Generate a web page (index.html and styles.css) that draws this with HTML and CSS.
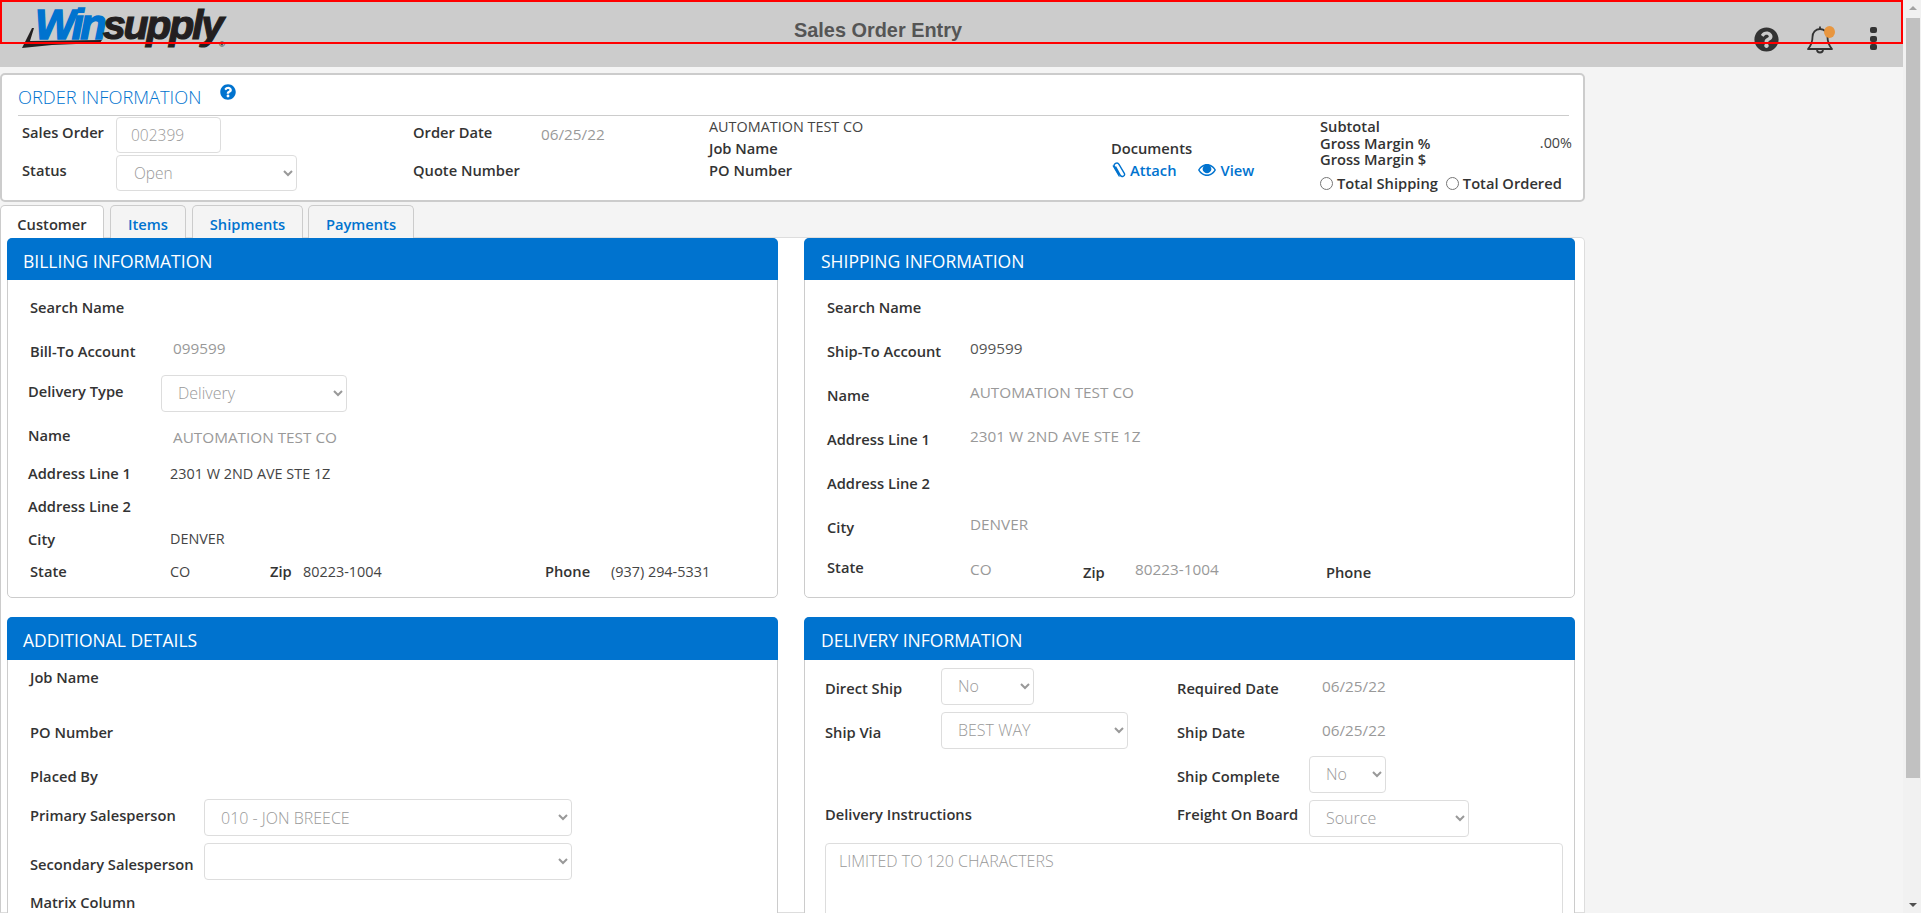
FILE: index.html
```html
<!DOCTYPE html>
<html lang="en">
<head>
  <meta charset="UTF-8" />
  <title>Sales Order Entry</title>
  <link rel="stylesheet" href="styles.css">
</head>
<body>
  <div class="page">
    <header class="topbar">
      <div class="logo">
        <svg class="swoosh" width="90" height="24" viewBox="0 0 90 24"><polygon points="0,23 10,3 12,3 8,16 80,15 78,18 30,20"/></svg>
        <span class="logo-win">Win</span><span class="logo-supply">supply</span><span class="logo-reg">®</span>
      </div>
      <div class="page-title">Sales Order Entry</div>
      <div class="top-icons">
        <svg class="icon-help" width="25" height="25" viewBox="0 0 512 512"><path d="M504 256c0 136.997-111.043 248-248 248S8 392.997 8 256C8 119.083 119.043 8 256 8s248 111.083 248 248zM262.655 90c-54.497 0-89.255 22.957-116.549 63.758-3.536 5.286-2.353 12.415 2.715 16.258l34.699 26.31c5.205 3.947 12.621 3.008 16.665-2.122 17.864-22.658 30.113-35.797 57.303-35.797 20.429 0 45.698 13.148 45.698 32.958 0 14.976-12.363 22.667-32.534 33.976C247.128 238.528 216 254.941 216 296v4c0 6.627 5.373 12 12 12h56c6.627 0 12-5.373 12-12v-1.333c0-28.462 83.186-29.647 83.186-106.667 0-58.002-60.165-102-116.531-102zM256 338c-25.365 0-46 20.635-46 46 0 25.364 20.635 46 46 46s46-20.636 46-46c0-25.365-20.635-46-46-46z"/></svg>
        <div class="bell">
          <svg width="28" height="30" viewBox="0 0 28 30" fill="none" stroke="#333" stroke-width="1.8" stroke-linejoin="round"><path d="M14 1.500v2.500M14 4c-4.600 0-7.500 3.600-7.500 8 0 6-1.500 8.500-4.500 12h24c-3-3.500-4.500-6-4.500-12 0-4.400-2.900-8-7.500-8z"/><path d="M11 24.500a3 3 0 0 0 6 0"/></svg>
          <span class="bell-dot"></span>
        </div>
        <div class="kebab"><span></span><span></span><span></span></div>
      </div>
    </header>
    <div class="red-frame"></div>

    <main class="content">
      <section class="order-card">
        <div class="order-head">
          <h2>ORDER INFORMATION</h2>
          <svg class="icon-info" width="16" height="16" viewBox="0 0 512 512"><path d="M504 256c0 136.997-111.043 248-248 248S8 392.997 8 256C8 119.083 119.043 8 256 8s248 111.083 248 248zM262.655 90c-54.497 0-89.255 22.957-116.549 63.758-3.536 5.286-2.353 12.415 2.715 16.258l34.699 26.31c5.205 3.947 12.621 3.008 16.665-2.122 17.864-22.658 30.113-35.797 57.303-35.797 20.429 0 45.698 13.148 45.698 32.958 0 14.976-12.363 22.667-32.534 33.976C247.128 238.528 216 254.941 216 296v4c0 6.627 5.373 12 12 12h56c6.627 0 12-5.373 12-12v-1.333c0-28.462 83.186-29.647 83.186-106.667 0-58.002-60.165-102-116.531-102zM256 338c-25.365 0-46 20.635-46 46 0 25.364 20.635 46 46 46s46-20.636 46-46c0-25.365-20.635-46-46-46z"/></svg>
        </div>
        <div class="order-info">
          <div class="col col-so">
            <div class="info-row"><span class="lbl so-lbl">Sales Order</span><input class="ctl so-input" value="002399"></div>
            <div class="info-row"><span class="lbl so-lbl">Status</span><select class="ctl so-status"><option>Open</option></select></div>
          </div>
          <div class="col col-date">
            <div class="info-row"><span class="lbl date-lbl">Order Date</span><span class="val muted date-val">06/25/22</span></div>
            <div class="info-row"><span class="lbl">Quote Number</span></div>
          </div>
          <div class="col col-cust">
            <div class="line"><span class="val">AUTOMATION TEST CO</span></div>
            <div class="line"><span class="lbl">Job Name</span></div>
            <div class="line"><span class="lbl">PO Number</span></div>
          </div>
          <div class="col col-docs">
            <div class="line"><span class="lbl">Documents</span></div>
            <div class="line links">
              <a class="link">
                <svg width="15" height="17" viewBox="0 0 15 17" fill="none" stroke="#0073cf" stroke-width="1.4"><path d="M4.500 4.500l5 9a2.200 2.200 0 0 0 3.800-2.200L8 2.300A2.600 2.600 0 0 0 3.500 4.900l4.600 8.200"/><path d="M2 3.500l6.500 11"/></svg>
                Attach</a>
              <a class="link">
                <svg width="18" height="12" viewBox="0 0 18 12"><path fill="#0073cf" d="M9 0C5 0 2 2.500 0 6c2 3.500 5 6 9 6s7-2.500 9-6c-2-3.500-5-6-9-6zm0 10.600C5.800 10.600 3.300 8.700 1.600 6 2.700 4.300 4.100 3 5.800 2.200A4.200 4.200 0 1 0 12.200 2.200C13.900 3 15.300 4.300 16.400 6c-1.700 2.700-4.200 4.600-7.400 4.600z"/></svg>
                View</a>
            </div>
          </div>
          <div class="col col-totals">
            <div class="total-line"><span class="lbl">Subtotal</span></div>
            <div class="total-line"><span class="lbl">Gross Margin %</span><span class="val">.00%</span></div>
            <div class="total-line"><span class="lbl">Gross Margin $</span></div>
            <div class="radios">
              <label class="lbl"><input type="radio" name="tot">Total Shipping</label>
              <label class="lbl"><input type="radio" name="tot">Total Ordered</label>
            </div>
          </div>
        </div>
      </section>

      <nav class="tabs">
        <a class="tab active">Customer</a>
        <a class="tab tab-items">Items</a>
        <a class="tab tab-ship">Shipments</a>
        <a class="tab tab-pay">Payments</a>
      </nav>

      <div class="tab-body">
        <section class="panel">
          <h3>BILLING INFORMATION</h3>
          <div class="rows billing-rows">
            <div class="row"><span class="lbl f-lbl in">Search Name</span></div>
            <div class="row"><span class="lbl f-lbl in">Bill-To Account</span><span class="val muted in up3">099599</span></div>
            <div class="row"><span class="lbl f-lbl-s up2">Delivery Type</span><select class="ctl sel-del"><option>Delivery</option></select></div>
            <div class="row"><span class="lbl f-lbl">Name</span><span class="val muted in dn2">AUTOMATION TEST CO</span></div>
            <div class="row"><span class="lbl f-lbl">Address Line 1</span><span class="val">2301 W 2ND AVE STE 1Z</span></div>
            <div class="row"><span class="lbl f-lbl">Address Line 2</span></div>
            <div class="row"><span class="lbl f-lbl">City</span><span class="val">DENVER</span></div>
            <div class="row"><span class="lbl f-lbl in">State</span><span class="val bill-state">CO</span><span class="lbl bill-zip">Zip</span><span class="val bill-zipval">80223-1004</span><span class="lbl bill-phone">Phone</span><span class="val">(937) 294-5331</span></div>
          </div>
        </section>

        <section class="panel">
          <h3>SHIPPING INFORMATION</h3>
          <div class="rows shipping-rows">
            <div class="row"><span class="lbl f-lbl">Search Name</span></div>
            <div class="row"><span class="lbl f-lbl">Ship-To Account</span><span class="val big up3">099599</span></div>
            <div class="row"><span class="lbl f-lbl">Name</span><span class="val muted up3">AUTOMATION TEST CO</span></div>
            <div class="row"><span class="lbl f-lbl">Address Line 1</span><span class="val muted up3">2301 W 2ND AVE STE 1Z</span></div>
            <div class="row"><span class="lbl f-lbl">Address Line 2</span></div>
            <div class="row"><span class="lbl f-lbl">City</span><span class="val muted up3">DENVER</span></div>
            <div class="row"><span class="lbl f-lbl up4">State</span><span class="val muted ship-state up2">CO</span><span class="lbl ship-zip dn1">Zip</span><span class="val muted ship-zipval up2">80223-1004</span><span class="lbl dn1">Phone</span></div>
          </div>
        </section>

        <section class="panel">
          <h3 class="tall">ADDITIONAL DETAILS</h3>
          <div class="rows details-rows">
            <div class="row top-row"><span class="lbl">Job Name</span></div>
            <div class="row"><span class="lbl">PO Number</span></div>
            <div class="row"><span class="lbl">Placed By</span></div>
            <div class="row"><span class="lbl d-lbl up3">Primary Salesperson</span><select class="ctl sel-sales"><option>010 - JON BREECE</option></select></div>
            <div class="row"><span class="lbl d-lbl dn2">Secondary Salesperson</span><select class="ctl sel-sales"><option></option></select></div>
            <div class="row"><span class="lbl">Matrix Column</span></div>
          </div>
        </section>

        <section class="panel">
          <h3 class="tall">DELIVERY INFORMATION</h3>
          <div class="rows delivery-rows">
            <div class="row">
              <span class="lbl dl-lbl dn2">Direct Ship</span><select class="ctl sel-no"><option>No</option></select>
              <span class="lbl dr-lbl dn2">Required Date</span><span class="val muted">06/25/22</span>
            </div>
            <div class="row">
              <span class="lbl dl-lbl dn2">Ship Via</span><select class="ctl sel-via"><option>BEST WAY</option></select>
              <span class="lbl dr-lbl via-gap dn2">Ship Date</span><span class="val muted">06/25/22</span>
            </div>
            <div class="row">
              <span class="lbl complete dn2">Ship Complete</span><select class="ctl sel-no2"><option>No</option></select>
            </div>
            <div class="row">
              <span class="lbl instr up4">Delivery Instructions</span>
              <span class="lbl fob up4">Freight On Board</span><select class="ctl sel-fob"><option>Source</option></select>
            </div>
            <textarea class="notes" placeholder="LIMITED TO 120 CHARACTERS"></textarea>
          </div>
        </section>
      </div>
    </main>
  </div>

  <aside class="scrollbar">
    <span class="arrow-up"></span>
    <div class="thumb"></div>
    <span class="arrow-down"></span>
  </aside>
</body>
</html>
```

FILE: styles.css
```css
* {
  box-sizing: border-box;
}

html, body {
  height: 100%;
}

body {
  margin: 0;
  display: flex;
  overflow: hidden;
  font-family: "Open Sans", sans-serif;
  font-size: 14.7px;
  color: #333;
  background-color: #f4f4f4;
}

.page {
  position: relative;
  flex: 1;
  height: 913px;
  overflow: hidden;
}

/* top bar */
.topbar {
  display: flex;
  height: 67px;
  background-color: #ccc;
}

.logo {
  position: relative;
  display: flex;
  align-items: baseline;
  width: 794px;
  height: 48px;
  padding: 0 0 0 35px;
  font-family: "Liberation Sans", sans-serif;
  font-weight: 700;
  font-style: italic;
  line-height: 48px;
  white-space: nowrap;
}

.swoosh {
  position: absolute;
  left: 22px;
  top: 25px;
  fill: #231f20;
}

.logo-win {
  font-size: 43px;
  letter-spacing: -3.5px;
  color: #0073cf;
  -webkit-text-stroke: 1.5px #0073cf;
}

.logo-supply {
  font-size: 41px;
  letter-spacing: -2.2px;
  color: #231f20;
  -webkit-text-stroke: 1.2px #231f20;
}

.logo-reg {
  position: absolute;
  left: 219px;
  top: 41px;
  font-size: 8px;
  line-height: 8px;
  font-style: normal;
  color: #231f20;
}

.page-title {
  padding-top: 19px;
  font-family: "Liberation Sans", sans-serif;
  font-size: 19.9px;
  line-height: 22px;
  font-weight: 700;
  color: #555;
}

.top-icons {
  position: absolute;
  top: 0;
  left: 1754px;
  display: flex;
  align-items: flex-start;
}

.icon-help {
  margin-top: 27px;
  fill: #333;
}

.bell {
  position: relative;
  margin: 25px 0 0 27px;
}

.bell-dot {
  position: absolute;
  left: 18px;
  top: 1px;
  width: 11px;
  height: 12px;
  border-radius: 50%;
  background-color: #e8963f;
}

.kebab {
  display: flex;
  flex-direction: column;
  gap: 2.500px;
  margin: 27px 0 0 36px;
}

.kebab span {
  display: block;
  width: 7px;
  height: 6px;
  border-radius: 2px;
  background-color: #333;
}

/* marker frame lying over the bar */
.red-frame {
  position: absolute;
  left: 0;
  top: 0;
  width: 1903px;
  height: 44px;
  border: 2px solid #f00;
}

/* order card */
.content {
  width: 1585px;
  padding-top: 6px;
}

.order-card {
  height: 129px;
  padding: 0 14px 0 16px;
  background-color: #fff;
  border: 2px solid #ccc;
  border-radius: 5px;
}

.order-head {
  display: flex;
  height: 41px;
  border-bottom: 1px solid #ccc;
}

.order-head h2 {
  margin: 0;
  padding-top: 10px;
  font-size: 18.3px;
  line-height: 24px;
  font-weight: 300;
  color: #0073cf;
}

.icon-info {
  margin: 9px 0 0 19px;
  fill: #0073cf;
}

.order-info {
  display: flex;
}

.col {
  flex: none;
}

.lbl {
  font-weight: 600;
  white-space: nowrap;
}

.val {
  font-size: 14.4px;
  font-weight: 400;
  white-space: nowrap;
  color: #444;
}

.val.big {
  font-size: 15.3px;
  color: #555;
}

.val.muted {
  font-size: 15.3px;
  color: #999;
}

.col-so {
  width: 395px;
  padding: 1px 0 0 4px;
}

.col-date {
  width: 296px;
  padding-top: 1px;
}

.col-date .info-row {
  padding-bottom: 6px;
}

.date-val {
  position: relative;
  top: 2px;
}

.col-cust {
  width: 402px;
  margin-top: -1px;
}

.col-docs {
  width: 209px;
  margin-top: -1px;
  padding-top: 22px;
}

.col-totals {
  width: 252px;
  margin-top: -1px;
}

.info-row {
  display: flex;
  align-items: center;
  height: 36px;
  margin-bottom: 2px;
}

.so-lbl {
  width: 94px;
  padding-bottom: 6px;
}

.date-lbl {
  width: 128px;
}

.ctl {
  height: 37px;
  padding: 0 12px;
  font-family: "Open Sans", sans-serif;
  font-size: 16px;
  font-weight: 300;
  color: #999;
  background-color: #fff;
  border: 1px solid #ddd;
  border-radius: 4px;
  outline: none;
}

.so-input {
  width: 105px;
  height: 36px;
  padding-left: 14px;
  font-size: 15.5px;
}

.so-status {
  width: 181px;
  height: 36px;
  padding-left: 13px;
  font-size: 15.5px;
}

.line {
  display: flex;
  align-items: center;
  height: 22px;
}

.links {
  gap: 22px;
}

.link {
  display: flex;
  align-items: center;
  gap: 4px;
  font-weight: 600;
  color: #0073cf;
}

.total-line {
  display: flex;
  align-items: center;
  justify-content: space-between;
  height: 16.5px;
}

.col-totals .total-line:first-child {
  margin-top: 3px;
}

.radios {
  display: flex;
  gap: 8px;
  margin-top: 4px;
}

.radios label {
  display: flex;
  align-items: center;
  height: 22px;
}

.radios input {
  width: 13px;
  height: 13px;
  margin: 2px 4px 0 0;
}

/* tabs */
.tabs {
  display: flex;
  height: 36px;
  padding: 3px 0 0;
}

.tab {
  display: block;
  height: 33px;
  margin-right: 5px;
  padding-top: 8px;
  font-weight: 600;
  line-height: 20px;
  text-align: center;
  color: #0073cf;
  background-color: #f4f4f4;
  border: 1px solid #ccc;
  border-bottom: 0;
  border-radius: 5px 5px 0 0;
}

.tab.active {
  width: 104px;
  color: #333;
  background-color: #fff;
}

.tab-items {
  width: 76px;
  margin-left: 1px;
}

.tab-ship {
  width: 111px;
  margin-left: 1px;
}

.tab-pay {
  width: 106px;
}

.tab-body {
  display: grid;
  grid-template-columns: 770px 770px;
  column-gap: 27px;
  row-gap: 19px;
  align-items: start;
  height: 676px;
  padding: 0 0 0 7px;
  background-color: #fff;
  border: 1px solid #ddd;
  border-left-color: #ccc;
  border-radius: 0 5px 0 0;
  margin-top: -1px;
}

/* panels */
.panel {
  background-color: #fff;
  border: 1px solid #ccc;
  border-radius: 5px;
  margin-left: -1px;
  height: 360px;
}

.panel:nth-child(n+3) {
  height: 400px;
}

.panel h3 {
  display: flex;
  align-items: center;
  height: 42px;
  margin: -1px -1px 0;
  padding: 3px 0 0 16px;
  font-size: 17.5px;
  font-weight: 400;
  color: #fff;
  background-color: #0073cf;
  border-radius: 5px 5px 0 0;
}

.panel:nth-child(even) h3 {
  padding-left: 17px;
}

.panel h3.tall {
  height: 43px;
  padding-top: 2px;
}

.rows {
  display: grid;
  padding-left: 20px;
}

.row {
  display: flex;
  align-items: center;
}

.billing-rows {
  padding-top: 5px;
  grid-template-rows: 44px 44px 40px 44px 32px 33px 33px 32px;
}

.shipping-rows {
  padding: 5px 0 0 22px;
  grid-template-rows: 44px 44px 44px 44px 44px 44px 44px;
}

.shipping-rows .f-lbl {
  width: 143px;
}

.details-rows {
  padding-left: 22px;
  grid-template-rows: 50px 44px 44px 39px 49px 32px;
}

.top-row {
  align-items: flex-start;
  padding-top: 7px;
}

.delivery-rows {
  padding: 4px 10px 0 20px;
  grid-template-rows: 44px 44px 44px 44px auto;
}

.f-lbl {
  width: 142px;
}

.f-lbl-s {
  width: 133px;
}

.in {
  padding-left: 2px;
}

.val.in {
  padding-left: 3px;
}

.up2 {
  position: relative;
  top: -2px;
}

.up3 {
  position: relative;
  top: -3px;
}

.up4 {
  position: relative;
  top: -4px;
}

.dn1 {
  position: relative;
  top: 1px;
}

.dn2 {
  position: relative;
  top: 2px;
}

.sel-del {
  width: 186px;
}

.bill-state {
  width: 100px;
}

.bill-zip {
  width: 33px;
}

.bill-zipval {
  width: 242px;
}

.bill-phone {
  width: 66px;
}

.ship-state {
  width: 113px;
}

.ship-zip {
  width: 52px;
}

.ship-zipval {
  width: 191px;
}

.d-lbl {
  width: 174px;
}

.sel-sales {
  width: 368px;
}

.dl-lbl {
  width: 116px;
}

.sel-no {
  width: 93px;
}

.dr-lbl {
  width: 145px;
  margin-left: 143px;
}

.via-gap {
  margin-left: 49px;
}

.sel-via {
  width: 187px;
}

.complete {
  width: 132px;
  margin-left: 352px;
}

.sel-no2 {
  width: 77px;
}

.instr {
  width: 352px;
}

.fob {
  width: 132px;
}

.sel-fob {
  width: 160px;
}

.notes {
  width: 738px;
  height: 120px;
  margin-top: 3px;
  padding: 6px 13px;
  font-family: "Open Sans", sans-serif;
  font-size: 16px;
  font-weight: 300;
  background-color: #fff;
  border: 1px solid #ddd;
  border-radius: 4px;
  resize: none;
}

.notes::placeholder {
  color: #999;
}

/* drawn scrollbar */
.scrollbar {
  display: flex;
  flex-direction: column;
  align-items: center;
  flex: 0 0 18px;
  width: 18px;
  height: 913px;
  padding-left: 1px;
  background-color: #f1f1f1;
}

.arrow-up {
  width: 0;
  height: 0;
  margin: 6px 0 8px;
  border: 4px solid transparent;
  border-top: 0;
  border-bottom: 4px solid #a3a3a3;
}

.thumb {
  width: 14px;
  height: 760px;
  background-color: #c1c1c1;
}

.arrow-down {
  width: 0;
  height: 0;
  margin-top: auto;
  margin-bottom: 6px;
  border: 4px solid transparent;
  border-bottom: 0;
  border-top: 4px solid #505050;
}
```
